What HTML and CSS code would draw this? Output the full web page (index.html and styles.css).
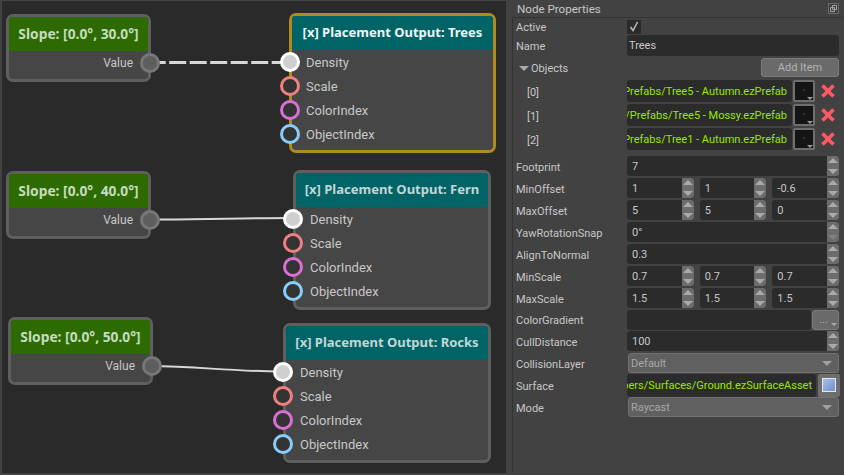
FILE: index.html
```html
<!DOCTYPE html>
<html>
<head>
    <title>Node Properties</title>
    <link rel="stylesheet" href="styles.css">
</head>
<body>
    <div class="canvas">
        <svg class="wires" width="504" height="472">
            <path class="wire wire-dash" d="M148.7 62.5 H281"/>
            <path class="wire" d="M150 219.5 C 200 220, 240 218, 291 218"/>
            <path class="wire" d="M150 366 C 200 366.5, 225 371, 281 371.5"/>
        </svg>

        <div class="node slope slope-1">
            <div class="node-head">Slope: [0.0°, 30.0°]</div>
            <div class="node-out">Value<span class="port port-out"></span></div>
        </div>
        <div class="node slope slope-2">
            <div class="node-head">Slope: [0.0°, 40.0°]</div>
            <div class="node-out">Value<span class="port port-out"></span></div>
        </div>
        <div class="node slope slope-3">
            <div class="node-head">Slope: [0.0°, 50.0°]</div>
            <div class="node-out">Value<span class="port port-out"></span></div>
        </div>

        <div class="node output output-trees selected">
            <div class="node-head">[x] Placement Output: Trees</div>
            <div class="pin"><span class="port port-density"></span>Density</div>
            <div class="pin"><span class="port port-scale"></span>Scale</div>
            <div class="pin"><span class="port port-color"></span>ColorIndex</div>
            <div class="pin"><span class="port port-object"></span>ObjectIndex</div>
        </div>
        <div class="node output output-fern">
            <div class="node-head">[x] Placement Output: Fern</div>
            <div class="pin"><span class="port port-density"></span>Density</div>
            <div class="pin"><span class="port port-scale"></span>Scale</div>
            <div class="pin"><span class="port port-color"></span>ColorIndex</div>
            <div class="pin"><span class="port port-object"></span>ObjectIndex</div>
        </div>
        <div class="node output output-rocks">
            <div class="node-head">[x] Placement Output: Rocks</div>
            <div class="pin"><span class="port port-density"></span>Density</div>
            <div class="pin"><span class="port port-scale"></span>Scale</div>
            <div class="pin"><span class="port port-color"></span>ColorIndex</div>
            <div class="pin"><span class="port port-object"></span>ObjectIndex</div>
        </div>
    </div>

    <div class="panel">
        <div class="panel-title">
            <span>Node Properties</span>
            <svg class="float-icon" width="11" height="11" viewBox="0 0 11 11"><path d="M.5.5h10v10H.5z" fill="none" stroke="#909090" stroke-dasharray="1 1"/><path d="M4.5 2.5h4v4h-4zM2.5 4.5h4v4h-4z" fill="none" stroke="#a0a0a0"/></svg>
        </div>
        <div class="props">
            <div class="row row-active">
                <label>Active</label>
                <span class="checkbox"><svg width="10" height="11" viewBox="0 0 10 11"><path d="M1.5 6l2.5 3.5L8.5 1" fill="none" stroke="#b8b8b8" stroke-width="1.6"/></svg></span>
            </div>
            <div class="row row-name">
                <label>Name</label>
                <div class="field">Trees</div>
            </div>
            <div class="row row-objects">
                <label class="group"><i class="tri"></i>Objects</label>
                <button class="add-item">Add Item</button>
            </div>
            <div class="row row-item">
                <label class="index">[0]</label>
                <div class="field asset"><span>Prefabs/Tree5 - Autumn.ezPrefab</span></div>
                <span class="thumb"></span>
                <svg class="del" width="14" height="14" viewBox="0 0 14 14"><path d="M1.5 1.5l11 11M12.5 1.5l-11 11"/></svg>
            </div>
            <div class="row row-item">
                <label class="index">[1]</label>
                <div class="field asset"><span>/Prefabs/Tree5 - Mossy.ezPrefab</span></div>
                <span class="thumb"></span>
                <svg class="del" width="14" height="14" viewBox="0 0 14 14"><path d="M1.5 1.5l11 11M12.5 1.5l-11 11"/></svg>
            </div>
            <div class="row row-item">
                <label class="index">[2]</label>
                <div class="field asset"><span>Prefabs/Tree1 - Autumn.ezPrefab</span></div>
                <span class="thumb"></span>
                <svg class="del" width="14" height="14" viewBox="0 0 14 14"><path d="M1.5 1.5l11 11M12.5 1.5l-11 11"/></svg>
            </div>

            <div class="row row-first">
                <label>Footprint</label>
                <div class="field spin">7<b class="spinner"></b></div>
            </div>
            <div class="row">
                <label>MinOffset</label>
                <div class="triple">
                    <div class="field spin">1<b class="spinner"></b></div>
                    <div class="field spin">1<b class="spinner"></b></div>
                    <div class="field spin">-0.6<b class="spinner"></b></div>
                </div>
            </div>
            <div class="row">
                <label>MaxOffset</label>
                <div class="triple">
                    <div class="field spin">5<b class="spinner"></b></div>
                    <div class="field spin">5<b class="spinner"></b></div>
                    <div class="field spin">0<b class="spinner"></b></div>
                </div>
            </div>
            <div class="row">
                <label>YawRotationSnap</label>
                <div class="field spin">0°<b class="spinner spinner-off"></b></div>
            </div>
            <div class="row">
                <label>AlignToNormal</label>
                <div class="field spin">0.3<b class="spinner"></b></div>
            </div>
            <div class="row">
                <label>MinScale</label>
                <div class="triple">
                    <div class="field spin">0.7<b class="spinner"></b></div>
                    <div class="field spin">0.7<b class="spinner"></b></div>
                    <div class="field spin">0.7<b class="spinner"></b></div>
                </div>
            </div>
            <div class="row">
                <label>MaxScale</label>
                <div class="triple">
                    <div class="field spin">1.5<b class="spinner"></b></div>
                    <div class="field spin">1.5<b class="spinner"></b></div>
                    <div class="field spin">1.5<b class="spinner"></b></div>
                </div>
            </div>
            <div class="row row-gradient">
                <label>ColorGradient</label>
                <div class="field"></div>
                <button class="dots">...<i class="corner"></i></button>
            </div>
            <div class="row">
                <label>CullDistance</label>
                <div class="field spin">100<b class="spinner"></b></div>
            </div>
            <div class="row">
                <label>CollisionLayer</label>
                <div class="combo">Default<i class="combo-arrow"></i></div>
            </div>
            <div class="row">
                <label>Surface</label>
                <div class="field asset surface-path"><span>pers/Surfaces/Ground.ezSurfaceAsset</span></div>
                <span class="surface-btn"><i></i></span>
            </div>
            <div class="row">
                <label>Mode</label>
                <div class="combo">Raycast<i class="combo-arrow"></i></div>
            </div>
        </div>
    </div>
</body>
</html>
```

FILE: styles.css
```css
* {
    box-sizing: border-box;
}
html, body {
    height: 100%;
}
body {
    margin: 0;
    display: flex;
    overflow: hidden;
    background: #424242;
    color: #c8c8c8;
    font-family: Roboto, sans-serif;
    font-size: 11px;
}

/* graph canvas */
.canvas {
    position: relative;
    flex: 0 0 504px;
    height: 472px;
    margin: 1px 0 0 2px;
    background: #2a2a2a;
    font-size: 13px;
}
.wires {
    position: absolute;
    left: -2px;
    top: -1px;
}
.wire {
    fill: none;
    stroke: #d8d8d8;
    stroke-width: 2;
}
.wire-dash {
    stroke-width: 3;
    stroke-dasharray: 17 3.5;
}
.node {
    position: absolute;
    background: #464646;
    border: 3px solid #5f5f5f;
    border-radius: 7px;
}
.node-head {
    height: 34px;
    line-height: 33px;
    text-align: center;
    font-family: "Noto Sans", sans-serif;
    font-weight: bold;
    border-radius: 3px 3px 0 0;
}
.slope {
    width: 145px;
    height: 68px;
    left: 4px;
}
.slope .node-head {
    background: #2d6a00;
    color: #c4dcc0;
    font-size: 13.8px;
}
.slope-1 { top: 13px; }
.slope-2 { top: 170px; }
.slope-3 { top: 316px; left: 6px; }
.node-out {
    position: relative;
    height: 25px;
    padding-right: 15px;
    font-size: 12px;
    line-height: 25px;
    text-align: right;
}
.output {
    height: 140px;
}
.output .node-head {
    background: #006466;
    color: #c2d6d6;
    font-size: 13px;
}
.output-trees { left: 287px; top: 12px; width: 207px; }
.output-fern { left: 291px; top: 169px; width: 198px; }
.output-rocks { left: 281px; top: 322px; width: 208px; }
.selected {
    border-color: #b08a1e;
}
.selected .node-head {
    color: #f0f6f6;
}
.pin {
    position: relative;
    height: 24px;
    padding-left: 14px;
    line-height: 26px;
}
.port {
    position: absolute;
    width: 20px;
    height: 20px;
    border: 3px solid;
    border-radius: 50%;
    background: #333;
}
.pin .port {
    left: -13px;
    top: 2px;
}
.selected .pin .port {
    left: -12px;
}
.node-out .port {
    right: -12px;
    top: 2px;
    background: #5e5e5e;
    border-color: #777;
}
.port-density { background: #cfcfcf; border-color: #fff; }
.port-scale { border-color: #f08080; }
.port-color { border-color: #da70d6; }
.port-object { border-color: #87cefa; }

/* properties panel */
.panel {
    flex: 1;
    min-width: 0;
    padding-left: 6px;
}
.panel-title {
    display: flex;
    justify-content: space-between;
    align-items: center;
    height: 17px;
    padding: 0 5px 0 5px;
    font-size: 11.6px;
}
.props {
    height: 455px;
    padding: 1px 5px 0 0;
    border-left: 1px solid #333;
    border-top: 1px solid #333;
}
.row {
    display: flex;
    align-items: center;
    height: 22px;
    gap: 1px;
}
.row label {
    flex: 0 0 113px;
    padding: 2px 0 0 3px;
}
.row label.index {
    padding-left: 14px;
}
.row label.group {
    display: flex;
    align-items: center;
    padding-left: 6px;
}
.tri {
    width: 0;
    height: 0;
    margin-right: 2px;
    border: 5px solid transparent;
    border-top: 5px solid #a8a8a8;
    border-bottom: 0;
}
.row-active { height: 15px; }
.row-objects { height: 23px; }
.row-item { height: 24px; }
.row-first { margin-top: 4px; }
.row-gradient { height: 21px; }
.field {
    position: relative;
    flex: 1;
    min-width: 0;
    height: 20px;
    padding-left: 5px;
    line-height: 21px;
    background: #2b2b2b;
    border-radius: 3px;
    white-space: nowrap;
}
.row-name .field {
    height: 21px;
    padding-left: 2px;
    line-height: 22px;
}
.row-item .field {
    flex: 0 0 165px;
    height: 22px;
    line-height: 23px;
}
.asset {
    display: flex;
    justify-content: flex-end;
    overflow: hidden;
    padding: 0 5px 0 0;
    color: #9ae600;
}
.surface-path {
    flex: 0 0 189px;
    height: 23px;
    line-height: 24px;
    padding-right: 4px;
}
.spinner {
    position: absolute;
    right: 0;
    top: 0;
    bottom: 0;
    width: 12px;
    background: #6c6c6c;
    border-radius: 0 3px 3px 0;
}
.spinner::before, .spinner::after {
    content: "";
    position: absolute;
    left: 1px;
    border: 5px solid transparent;
}
.spinner::before {
    top: 2px;
    border-bottom: 5px solid #aaa;
    border-top: 0;
}
.spinner::after {
    bottom: 2px;
    border-top: 5px solid #aaa;
    border-bottom: 0;
}
.spinner-off::after {
    border-top-color: #808080;
}
.triple {
    flex: 1;
    display: flex;
    gap: 6px;
}
.checkbox {
    width: 14px;
    height: 14px;
    display: flex;
    align-items: center;
    justify-content: center;
    background: #2b2b2b;
}
.add-item, .dots {
    font: inherit;
    color: #b4b4b4;
    padding: 0;
    background: #6a6a6a;
    border: 1px solid #7a7a7a;
    border-radius: 3px;
}
.add-item {
    width: 78px;
    height: 19px;
    margin-left: auto;
    line-height: 16px;
}
.thumb {
    position: relative;
    flex: 0 0 22px;
    height: 22px;
    background: radial-gradient(circle at 50% 45%, #3a3418 0, #3a3418 1px, #151515 1.5px);
    border: 2px solid #6e6e6e;
    border-radius: 2px;
}
.thumb::after {
    content: "";
    position: absolute;
    right: 0;
    bottom: 0;
    border: 3px solid transparent;
    border-top: 3px solid #999;
    border-bottom: 0;
}
.del {
    margin-left: 5px;
    fill: none;
    stroke: #ff5a62;
    stroke-width: 3.6;
}
.dots {
    position: relative;
    flex: 0 0 27px;
    height: 20px;
    line-height: 16px;
    padding-right: 4px;
}
.corner {
    position: absolute;
    right: 1px;
    bottom: 3px;
    border: 3px solid transparent;
    border-top: 3px solid #aaa;
    border-bottom: 0;
}
.combo {
    position: relative;
    flex: 1;
    height: 20px;
    margin-left: 1px;
    padding-left: 2px;
    line-height: 20px;
    color: #a8a8a8;
    background: #606060;
    border: 1px solid #727272;
    border-radius: 3px;
}
.combo-arrow {
    position: absolute;
    right: 6px;
    top: 7px;
    border: 5px solid transparent;
    border-top: 5px solid #a0a0a0;
    border-bottom: 0;
}
.surface-btn {
    flex: 0 0 22px;
    height: 23px;
    margin-left: 1px;
    padding: 4px 4px;
    background: #6e6e6e;
    border-radius: 2px;
}
.surface-btn i {
    display: block;
    height: 14px;
    background: linear-gradient(135deg, #a8c0e8, #6e90d0);
    border: 1px solid #e8e8e8;
}
```
